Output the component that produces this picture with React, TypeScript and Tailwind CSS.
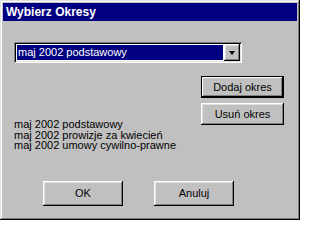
const raised =
  'shadow-[inset_-1px_-1px_#000,inset_1px_1px_#fff,inset_-2px_-2px_#808080,inset_2px_2px_#dfdfdf]';

function Button({ label, wide, def }: { label: string; wide?: boolean; def?: boolean }) {
  return (
    <div
      className={`flex items-center justify-center bg-[#c0c0c0] text-[11px] text-black ${
        wide ? 'w-[80px] h-[25px]' : 'w-[83px] h-[22px]'
      } ${
        def
          ? 'shadow-[inset_0_0_0_1px_#000,inset_-2px_-2px_#000,inset_2px_2px_#fff,inset_-3px_-3px_#808080]'
          : raised
      }`}
    >
      {label}
    </div>
  );
}

export default function App() {
  const items = ['maj 2002 podstawowy', 'maj 2002 prowizje za kwiecień', 'maj 2002 umowy cywilno-prawne'];

  return (
    <div
      className="w-[300px] h-[220px] bg-[#c0c0c0] p-[3px] shadow-[inset_-1px_-1px_#000,inset_1px_1px_#dfdfdf,inset_-2px_-2px_#808080,inset_2px_2px_#fff] flex flex-col"
      style={{ fontFamily: '"Liberation Sans", Arial, sans-serif' }}
    >
      {/* Title bar */}
      <div className="h-[18px] bg-[#000080] flex items-center pl-[3px] text-white font-bold text-[12px]">
        Wybierz Okresy
      </div>

      <div className="flex flex-col pl-[11px] pr-[13px]">
        {/* Combo box */}
        <div className="mt-[21px] w-[228px] h-[21px] bg-white flex p-[2px] shadow-[inset_1px_1px_#808080,inset_-1px_-1px_#fff,inset_2px_2px_#000,inset_-2px_-2px_#dfdfdf]">
          <div className="flex-1 bg-[#000080] m-[1px] flex items-center pl-[1px] text-white text-[11px] leading-none">
            maj 2002 podstawowy
          </div>
          <div className={`w-[16px] h-[17px] bg-[#c0c0c0] flex items-center justify-center ${raised}`}>
            <div className="w-0 h-0 border-l-[3.5px] border-r-[3.5px] border-t-[4px] border-l-transparent border-r-transparent border-t-black" />
          </div>
        </div>

        {/* List + side buttons */}
        <div className="mt-[13px] h-[105px] flex">
          <div className="flex-1 pt-[43px] text-[11px] leading-[10.7px] text-black">
            {items.map((it) => (
              <div key={it}>{it}</div>
            ))}
          </div>
          <div className="flex flex-col gap-[5px]">
            <Button label="Dodaj okres" def />
            <Button label="Usuń okres" />
          </div>
        </div>

        {/* Bottom buttons */}
        <div className="flex gap-[31px] pl-[29px]">
          <Button label="OK" wide />
          <Button label="Anuluj" wide />
        </div>
      </div>
    </div>
  );
}
